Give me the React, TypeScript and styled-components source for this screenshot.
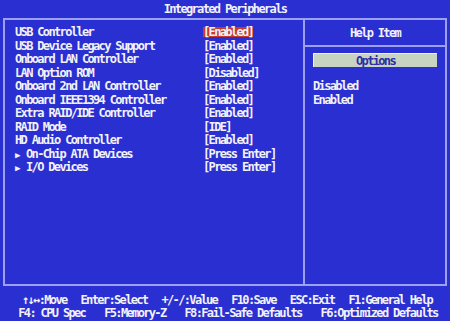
import React from 'react';
import styled, { createGlobalStyle } from 'styled-components';

const GlobalStyle = createGlobalStyle`
  html, body {
    margin: 0;
    padding: 0;
    background: #2a2fd2;
  }
`;

const Screen = styled.div`
  width: 450px;
  height: 321px;
  display: flex;
  flex-direction: column;
  background: #2a2fd2;
  color: #f2f2f6;
  font-family: 'DejaVu Sans Mono', 'Liberation Mono', monospace;
  font-weight: bold;
  font-size: 12px;
  letter-spacing: -1.65px;
  overflow: hidden;
`;

const TitleBar = styled.div`
  height: 18px;
  display: flex;
  align-items: center;
  justify-content: center;
  line-height: 12px;
`;

const Frame = styled.div`
  height: 264px;
  margin: 0 3px;
  display: flex;
  border: 2px solid #9d9ff2;
`;

const MainPanel = styled.div`
  width: 300px;
  padding: 6px 0 0 10px;
  border-right: 2px solid #9d9ff2;
  box-sizing: border-box;
`;

const Row = styled.div`
  display: flex;
  height: 13.5px;
  line-height: 13.5px;
`;

const Label = styled.div`
  width: 188px;
  white-space: pre;
`;

const Arrow = styled.span`
  display: inline-block;
  width: 11px;
  font-size: 9px;
  letter-spacing: 0;
`;

const Value = styled.div`
  white-space: pre;
`;

const Selected = styled.span`
  background: #c83a2c;
  display: inline-block;
  line-height: 10px;
`;

const HelpPanel = styled.div`
  flex: 1;
  display: flex;
  flex-direction: column;
`;

const HelpHead = styled.div`
  height: 25px;
  display: flex;
  align-items: center;
  justify-content: center;
  border-bottom: 2px solid #9d9ff2;
`;

const HelpBody = styled.div`
  padding: 6px 0 0 8px;
`;

const OptionsBox = styled.div`
  width: 124px;
  height: 14px;
  line-height: 14px;
  background: #c9d3c2;
  color: #2a2fa8;
  text-align: center;
  border-left: 1px solid #eef2ea;
  border-top: 1px solid #eef2ea;
  box-sizing: border-box;
  margin-bottom: 13px;
`;

const HelpLine = styled.div`
  height: 13.5px;
  line-height: 13.5px;
`;

const Footer = styled.div`
  padding-top: 8px;
  display: flex;
  flex-direction: column;
  align-items: center;
`;

const FooterLine = styled.div<{ $gap: number; $shift: number }>`
  display: flex;
  gap: ${(p) => p.$gap}px;
  height: 13px;
  line-height: 13px;
  white-space: pre;
  margin-left: ${(p) => p.$shift}px;
`;

const items: { label: string; value: string; sub?: boolean; selected?: boolean }[] = [
  { label: 'USB Controller', value: '[Enabled]', selected: true },
  { label: 'USB Device Legacy Support', value: '[Enabled]' },
  { label: 'Onboard LAN Controller', value: '[Enabled]' },
  { label: 'LAN Option ROM', value: '[Disabled]' },
  { label: 'Onboard 2nd LAN Controller', value: '[Enabled]' },
  { label: 'Onboard IEEE1394 Controller', value: '[Enabled]' },
  { label: 'Extra RAID/IDE Controller', value: '[Enabled]' },
  { label: 'RAID Mode', value: '[IDE]' },
  { label: 'HD Audio Controller', value: '[Enabled]' },
  { label: 'On-Chip ATA Devices', value: '[Press Enter]', sub: true },
  { label: 'I/O Devices', value: '[Press Enter]', sub: true },
];

export default function App() {
  return (
    <Screen>
      <GlobalStyle />
      <TitleBar>Integrated Peripherals</TitleBar>
      <Frame>
        <MainPanel>
          {items.map((it) => (
            <Row key={it.label}>
              <Label>
                {it.sub && <Arrow>▶</Arrow>}
                {it.label}
              </Label>
              <Value>{it.selected ? <Selected>{it.value}</Selected> : it.value}</Value>
            </Row>
          ))}
        </MainPanel>
        <HelpPanel>
          <HelpHead>Help Item</HelpHead>
          <HelpBody>
            <OptionsBox>Options</OptionsBox>
            <HelpLine>Disabled</HelpLine>
            <HelpLine>Enabled</HelpLine>
          </HelpBody>
        </HelpPanel>
      </Frame>
      <Footer>
        <FooterLine $gap={14} $shift={4}>
          <span>↑↓↔:Move</span>
          <span>Enter:Select</span>
          <span>+/-/:Value</span>
          <span>F10:Save</span>
          <span>ESC:Exit</span>
          <span>F1:General Help</span>
        </FooterLine>
        <FooterLine $gap={19} $shift={6}>
          <span>F4: CPU Spec</span>
          <span>F5:Memory-Z</span>
          <span>F8:Fail-Safe Defaults</span>
          <span>F6:Optimized Defaults</span>
        </FooterLine>
      </Footer>
    </Screen>
  );
}
